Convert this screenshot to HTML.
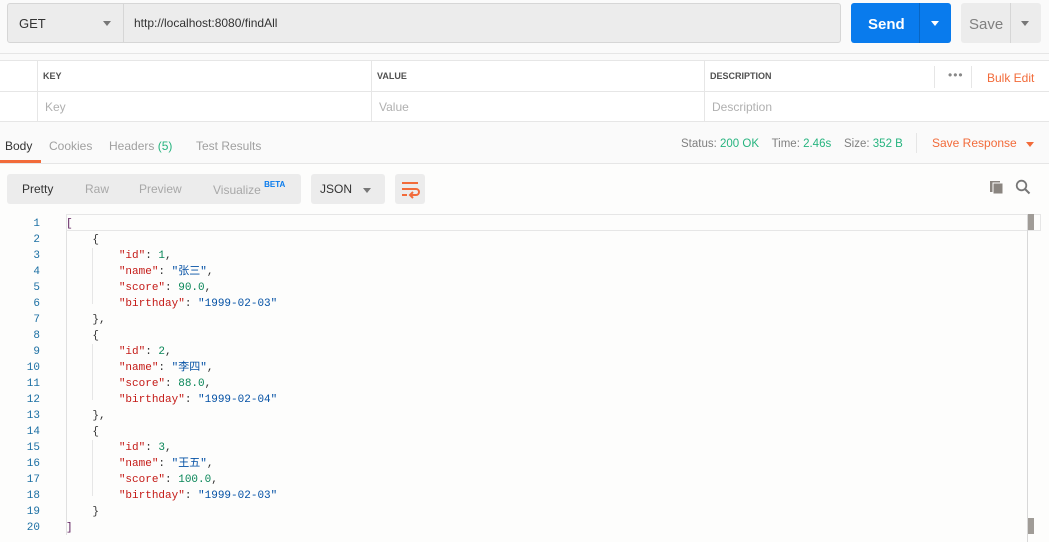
<!DOCTYPE html>
<html><head><meta charset="utf-8"><style>
*{box-sizing:border-box;margin:0;padding:0}
body{width:1049px;height:542px;overflow:hidden;background:#fafafa;font-family:"Liberation Sans","Noto Sans CJK SC",sans-serif;font-size:12px;color:#505050;position:relative}
.a{position:absolute}
.mono{font-family:"Liberation Mono","Noto Sans CJK SC",monospace;font-size:11px}
</style></head><body>
<!-- top bar -->
<div class="a" style="left:7px;top:3px;width:834px;height:40px;background:#ececec;border:1px solid #d6d6d6;border-radius:3px"></div>
<div class="a" style="left:123px;top:4px;width:1px;height:38px;background:#d6d6d6"></div>
<div class="a" style="left:19px;top:16px;font-size:13px;color:#333">GET</div>
<div class="a" style="left:103px;top:21px;border-left:4px solid transparent;border-right:4px solid transparent;border-top:5px solid #777"></div>
<div class="a" style="left:134px;top:16px;font-size:12px;color:#333">http://localhost:8080/findAll</div>
<div class="a" style="left:851px;top:3px;width:100px;height:40px;background:#097bed;border-radius:3px"></div>
<div class="a" style="left:919px;top:3px;width:1px;height:40px;background:#0866c4"></div>
<div class="a" style="left:868px;top:16px;font-size:15px;color:#fff;font-weight:bold">Send</div>
<div class="a" style="left:931px;top:21px;border-left:4px solid transparent;border-right:4px solid transparent;border-top:5px solid #fff"></div>
<div class="a" style="left:961px;top:3px;width:80px;height:40px;background:#ececec;border-radius:3px"></div>
<div class="a" style="left:1010px;top:3px;width:1px;height:40px;background:#d6d6d6"></div>
<div class="a" style="left:969px;top:16px;font-size:15px;color:#808080">Save</div>
<div class="a" style="left:1021px;top:21px;border-left:4px solid transparent;border-right:4px solid transparent;border-top:5px solid #777"></div>
<div class="a" style="left:0;top:53px;width:1049px;height:1px;background:#e6e6e6"></div>
<!-- params table -->
<div class="a" style="left:0;top:60px;width:1049px;height:62px;background:#fff;border-top:1px solid #e6e6e6;border-bottom:1px solid #e6e6e6"></div>
<div class="a" style="left:0;top:91px;width:1049px;height:1px;background:#e6e6e6"></div>
<div class="a" style="left:37px;top:61px;width:1px;height:61px;background:#e6e6e6"></div>
<div class="a" style="left:371px;top:61px;width:1px;height:61px;background:#e6e6e6"></div>
<div class="a" style="left:704px;top:61px;width:1px;height:61px;background:#e6e6e6"></div>
<div class="a" style="left:934px;top:66px;width:1px;height:22px;background:#e6e6e6"></div>
<div class="a" style="left:971px;top:66px;width:1px;height:22px;background:#e6e6e6"></div>
<div class="a" style="left:43px;top:71px;font-size:9px;font-weight:bold;color:#505050">KEY</div>
<div class="a" style="left:377px;top:71px;font-size:9px;font-weight:bold;color:#505050">VALUE</div>
<div class="a" style="left:710px;top:71px;font-size:9px;font-weight:bold;color:#505050">DESCRIPTION</div>
<div class="a" style="left:948px;top:68px;font-size:12px;color:#888;letter-spacing:1px">•••</div>
<div class="a" style="left:987px;top:71px;font-size:12px;color:#f26b3a">Bulk Edit</div>
<div class="a" style="left:45px;top:100px;color:#b0b0b0">Key</div>
<div class="a" style="left:379px;top:100px;color:#b0b0b0">Value</div>
<div class="a" style="left:712px;top:100px;color:#b0b0b0">Description</div>
<!-- tabs -->
<div class="a" style="left:5px;top:139px;font-size:12px;color:#333">Body</div>
<div class="a" style="left:0;top:160px;width:41px;height:3px;background:#f26b3a"></div>
<div class="a" style="left:49px;top:139px;color:#a0a0a0">Cookies</div>
<div class="a" style="left:109px;top:139px;color:#a0a0a0">Headers <span style="color:#26b47f">(5)</span></div>
<div class="a" style="left:196px;top:139px;color:#a0a0a0">Test Results</div>
<div class="a" style="left:0;top:163px;width:1049px;height:1px;background:#e6e6e6"></div>
<div class="a" style="left:681px;top:138px;font-size:11.5px;color:#808080">Status: <span style="color:#26b47f">200 OK</span>&nbsp;&nbsp;&nbsp; Time: <span style="color:#26b47f">2.46s</span>&nbsp;&nbsp;&nbsp; Size: <span style="color:#26b47f">352 B</span></div>
<div class="a" style="left:916px;top:133px;width:1px;height:20px;background:#e6e6e6"></div>
<div class="a" style="left:932px;top:136px;color:#f26b3a">Save Response</div>
<div class="a" style="left:1026px;top:142px;border-left:4px solid transparent;border-right:4px solid transparent;border-top:5px solid #f26b3a"></div>
<!-- body toolbar -->
<div class="a" style="left:0;top:164px;width:1049px;height:378px;background:#fdfdfc"></div>
<div class="a" style="left:7px;top:174px;width:294px;height:30px;background:#ececec;border-radius:3px"></div>
<div class="a" style="left:22px;top:182px;color:#333">Pretty</div>
<div class="a" style="left:85px;top:182px;color:#a8a8a8">Raw</div>
<div class="a" style="left:139px;top:182px;color:#a8a8a8">Preview</div>
<div class="a" style="left:213px;top:182px;color:#a8a8a8">Visualize <sup style="color:#097bed;font-size:8px;font-weight:bold;position:relative;top:-2px">BETA</sup></div>
<div class="a" style="left:311px;top:174px;width:74px;height:30px;background:#ececec;border-radius:3px"></div>
<div class="a" style="left:320px;top:182px;color:#333">JSON</div>
<div class="a" style="left:363px;top:188px;border-left:4px solid transparent;border-right:4px solid transparent;border-top:5px solid #777"></div>
<div class="a" style="left:395px;top:174px;width:30px;height:30px;background:#ececec;border-radius:3px"></div>
<svg class="a" style="left:395px;top:174px" width="30" height="30"><g stroke="#f26b3a" stroke-width="2" fill="none"><path d="M7 9h16M7 15h14a3 3 0 0 1 0 6h-5M7 21h5"/><path d="M18 18l-3 3 3 3"/></g></svg>
<svg class="a" style="left:989px;top:179px" width="16" height="16"><rect x="1" y="2" width="10" height="11" fill="#8a8580"/><rect x="4" y="4" width="10" height="11" fill="#8a8580" stroke="#fdfdfc" stroke-width="1"/></svg>
<svg class="a" style="left:1015px;top:179px" width="16" height="16"><circle cx="6.5" cy="6.5" r="4.8" stroke="#777" stroke-width="1.8" fill="none"/><path d="M10 10l4.5 4.5" stroke="#777" stroke-width="2"/></svg>
<!-- code -->
<div class="a" style="left:66px;top:214px;width:975px;height:17px;border:1px solid #e6e6e6;background:#fdfdfc"></div>
<div class="a" style="left:1027px;top:214px;width:1px;height:328px;background:#d8d8d8"></div>
<div class="a" style="left:1028px;top:214px;width:6px;height:16px;background:#a09c97"></div>
<div class="a" style="left:1028px;top:518px;width:6px;height:16px;background:#a09c97"></div>
<div class="a" style="left:66px;top:231px;width:1px;height:304px;background:#e0e0e0"></div>
<div class="a" style="left:92px;top:248px;width:1px;height:56px;background:#e6e6e6"></div>
<div class="a" style="left:92px;top:344px;width:1px;height:56px;background:#e6e6e6"></div>
<div class="a" style="left:92px;top:440px;width:1px;height:56px;background:#e6e6e6"></div>
<pre class="a mono" style="left:20px;top:216px;line-height:16px;color:#1b6fa3;text-align:right;width:20px">1
2
3
4
5
6
7
8
9
10
11
12
13
14
15
16
17
18
19
20</pre>
<pre class="a mono" style="left:66px;top:216px;line-height:16px;color:#333"><span style="color:#5a1a5a">[</span>
    {
        <span style="color:#c41a16">"id"</span>: <span style="color:#098658">1</span>,
        <span style="color:#c41a16">"name"</span>: <span style="color:#0451a5">"张三"</span>,
        <span style="color:#c41a16">"score"</span>: <span style="color:#098658">90.0</span>,
        <span style="color:#c41a16">"birthday"</span>: <span style="color:#0451a5">"1999-02-03"</span>
    },
    {
        <span style="color:#c41a16">"id"</span>: <span style="color:#098658">2</span>,
        <span style="color:#c41a16">"name"</span>: <span style="color:#0451a5">"李四"</span>,
        <span style="color:#c41a16">"score"</span>: <span style="color:#098658">88.0</span>,
        <span style="color:#c41a16">"birthday"</span>: <span style="color:#0451a5">"1999-02-04"</span>
    },
    {
        <span style="color:#c41a16">"id"</span>: <span style="color:#098658">3</span>,
        <span style="color:#c41a16">"name"</span>: <span style="color:#0451a5">"王五"</span>,
        <span style="color:#c41a16">"score"</span>: <span style="color:#098658">100.0</span>,
        <span style="color:#c41a16">"birthday"</span>: <span style="color:#0451a5">"1999-02-03"</span>
    }
<span style="color:#5a1a5a">]</span></pre>
</body></html>
